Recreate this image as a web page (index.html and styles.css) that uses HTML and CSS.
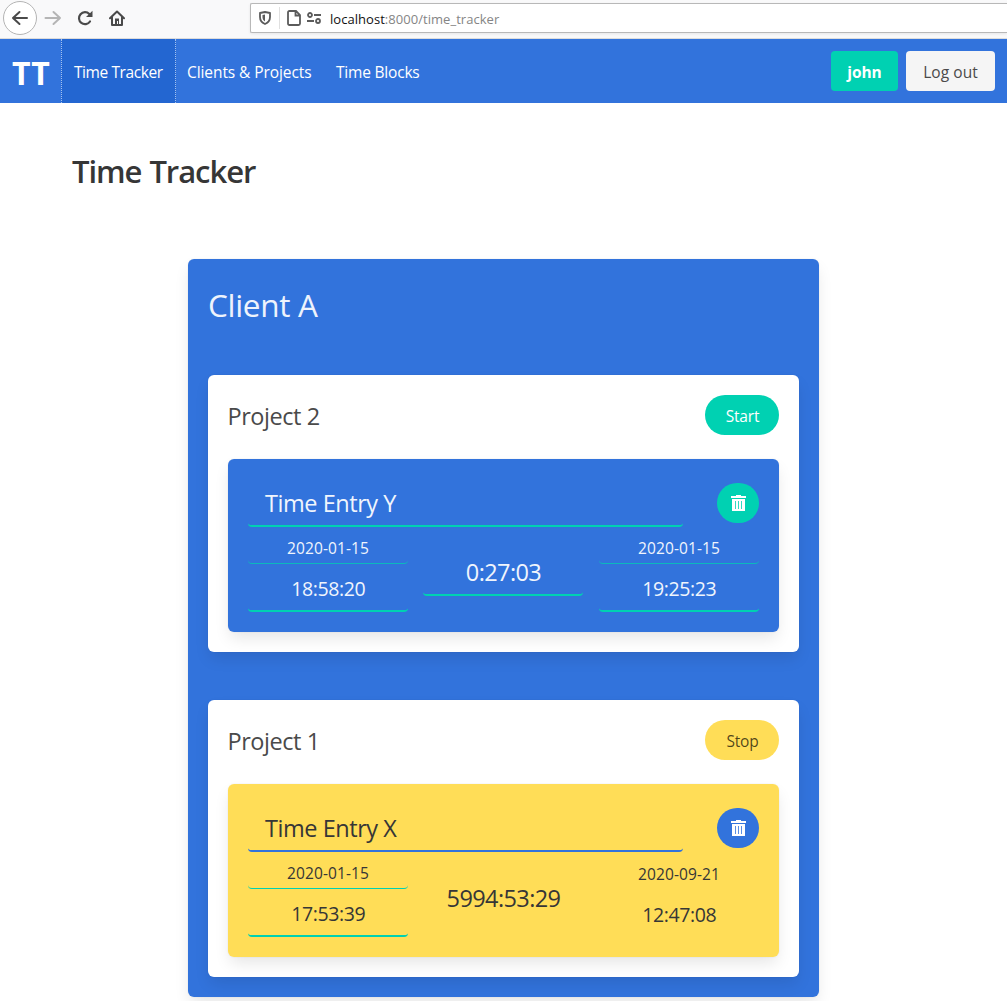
FILE: index.html
```html
<!DOCTYPE html>
<html lang="en">
<head>
<meta charset="utf-8">
<title>Time Tracker</title>
<link rel="stylesheet" href="styles.css">
</head>
<body>
<svg class="defs" width="0" height="0">
  <symbol id="trash" viewBox="0 0 15 16">
    <path fill="currentColor" fill-rule="evenodd" d="M5 0h5v1h5v2H0V1h5zM1 4h13v12H1zM4 6v8h.8V6zM7.100 6v8h.8V6zm3.100 0v8h.8V6z"/>
  </symbol>
</svg>
<header class="browser">
  <div class="controls">
    <span class="back"><svg width="18" height="16" viewBox="0 0 18 16"><path d="M16 8H2M8.500 2 2 8l6.500 6" fill="none" stroke="#4a4a4a" stroke-width="2" stroke-linecap="round" stroke-linejoin="round"/></svg></span>
    <svg class="forward" width="18" height="16" viewBox="0 0 18 16"><path d="M1.500 8H16M9.500 2 16 8l-6.500 6" fill="none" stroke="#b5b5b5" stroke-width="2" stroke-linecap="round" stroke-linejoin="round"/></svg>
    <svg class="reload" width="16" height="16" viewBox="0 0 16 16"><path d="M13 11.500A6 6 0 1 1 12.300 4" fill="none" stroke="#4a4a4a" stroke-width="2.200" stroke-linecap="round"/><path d="M15.500 .7V7H9z" fill="#4a4a4a"/></svg>
    <svg class="home" width="16" height="16" viewBox="0 0 16 16"><path d="M1 8.300 8 1.500l7 6.800M3 7v8h10V7" fill="none" stroke="#4a4a4a" stroke-width="2" stroke-linecap="round" stroke-linejoin="round"/><path d="M6 14V8.500h4V14H9v-3H8v3z" fill="#4a4a4a"/></svg>
  </div>
  <div class="address">
    <svg class="shield" width="12" height="14" viewBox="0 0 12 14"><path d="M6 1 11 2v4c0 3.500-1.800 5.700-5 7C2.800 11.700 1 9.500 1 6V2z" fill="none" stroke="#5b5b5b" stroke-width="1.800" stroke-linejoin="round"/><path d="M6 3.500v7C4 9.200 3.500 8 3.500 6V4z" fill="#5b5b5b"/></svg>
    <svg class="page" width="14" height="16" viewBox="0 0 14 16"><path d="M2.500 1H9l4 4v8.500q0 1.500-1.500 1.500h-9Q1 15 1 13.500v-11Q1 1 2.500 1zM8.500 1v4.500H13" fill="none" stroke="#5b5b5b" stroke-width="1.800"/></svg>
    <svg class="toggles" width="14" height="12" viewBox="0 0 14 12"><g fill="none" stroke="#5b5b5b" stroke-width="1.800"><circle cx="3" cy="3" r="2"/><path d="M7 3h7M0 9h7"/><circle cx="11" cy="9" r="2"/></g></svg>
    <span class="url"><b>localhost</b>:8000/time_tracker</span>
  </div>
</header>
<nav class="navbar">
  <a class="brand">TT</a>
  <a class="nav-item active">Time Tracker</a>
  <a class="nav-item projects">Clients &amp; Projects</a>
  <a class="nav-item">Time Blocks</a>
  <div class="account">
    <a class="button user">john</a>
    <a class="button logout">Log out</a>
  </div>
</nav>
<main>
  <h1>Time Tracker</h1>
  <section class="client">
    <h2>Client A</h2>
    <article class="project">
      <div class="project-head"><h3>Project 2</h3><a class="button pill start">Start</a></div>
      <div class="entry">
        <div class="entry-head"><div class="name">Time Entry Y</div><a class="trash"><svg width="15" height="16"><use href="#trash"/></svg></a></div>
        <div class="times">
          <div class="stamp"><div class="date">2020-01-15</div><div class="time">18:58:20</div></div>
          <div class="duration">0:27:03</div>
          <div class="stamp"><div class="date">2020-01-15</div><div class="time">19:25:23</div></div>
        </div>
      </div>
    </article>
    <article class="project">
      <div class="project-head"><h3>Project 1</h3><a class="button pill stop">Stop</a></div>
      <div class="entry running">
        <div class="entry-head"><div class="name">Time Entry X</div><a class="trash"><svg width="15" height="16"><use href="#trash"/></svg></a></div>
        <div class="times">
          <div class="stamp"><div class="date">2020-01-15</div><div class="time">17:53:39</div></div>
          <div class="duration">5994:53:29</div>
          <div class="stamp live"><div class="date">2020-09-21</div><div class="time">12:47:08</div></div>
        </div>
      </div>
    </article>
  </section>
</main>
</body>
</html>
```
FILE: styles.css
```css
* { box-sizing: border-box; }
body { margin: 0; height: 1001px; overflow: hidden; background: #fff; color: #4a4a4a; font: 15.5px/24px "Open Sans", "Noto Sans", sans-serif; letter-spacing: -.1px; white-space: nowrap; }
h1, h2, h3 { margin: 0; }
svg { display: block; flex: none; }
.defs { position: absolute; }

.browser { display: flex; height: 39px; background: #f9f9fa; border-bottom: 1px solid #dcdcdc; }
.controls { display: flex; align-items: center; width: 250px; padding-left: 3px; height: 36px; }
.back { display: flex; align-items: center; justify-content: center; width: 34px; height: 34px; border: 1px solid #b4b4b4; border-radius: 50%; background: #fff; }
.forward { margin-left: 7px; }
.reload { margin-left: 15px; }
.home { margin-left: 16px; }
.address { display: flex; align-items: center; flex: 1; height: 30px; margin-top: 3px; padding-left: 8px; background: #fff; border: 1px solid #b8b8b8; border-right: 0; border-radius: 2px 0 0 2px; box-shadow: 0 1px 3px rgba(0,0,0,.08); }
.shield { box-sizing: content-box; padding: 4px 8px 4px 0; border-right: 1px solid #e0e0e0; }
.page { margin-left: 7px; }
.toggles { margin-left: 6px; }
.url { margin-left: 9px; padding-top: 1px; font-size: 13px; letter-spacing: 0.04px; color: #858585; }
.url b { font-weight: 400; color: #111; }

.navbar { display: flex; height: 64px; background: #3273dc; color: #fff; }
.brand { width: 61px; padding-left: 12px; font-size: 32px; font-weight: 700; line-height: 68px; letter-spacing: .6px; }
.nav-item { padding: 0 12px; line-height: 67px; letter-spacing: -.2px; }
.nav-item.active { width: 115px; border: dotted #a4c2f0; border-width: 0 1px; background: #2366d1; letter-spacing: -.42px; }
.nav-item.projects { width: 148px; padding-left: 11px; letter-spacing: -.08px; }
.account { display: flex; gap: 8px; margin: 12px 12px 0 auto; }
.button { display: block; height: 40px; border-radius: 4px; line-height: 43px; text-align: center; }
.user { width: 67px; background: #00d1b2; font-weight: 700; }
.logout { width: 89px; background: #f5f5f5; color: #4a4a4a; letter-spacing: .05px; }

main { padding: 51px 72px 0; }
h1 { height: 36px; font-size: 31px; font-weight: 600; line-height: 34px; color: #363636; letter-spacing: -1.05px; word-spacing: 1px; }
.client { width: 631px; height: 738px; margin: 69px 0 0 116px; padding: 20px; border-radius: 6px; background: #3273dc; box-shadow: 0 8px 16px -2px rgba(10,10,10,.1), 0 0 0 1px rgba(10,10,10,.02); }
h2 { height: 96px; font-size: 31.5px; font-weight: 400; line-height: 52px; color: #eef3fc; letter-spacing: -.3px; }
.project { height: 277px; padding: 20px; border-radius: 6px; background: #fff; box-shadow: 0 8px 16px -2px rgba(10,10,10,.1), 0 0 0 1px rgba(10,10,10,.02); }
.project + .project { margin-top: 48px; }
.project-head { display: flex; justify-content: space-between; height: 64px; }
h3 { font-size: 23.5px; font-weight: 400; line-height: 42px; color: #4a4a4a; letter-spacing: -.45px; text-indent: -.5px; }
.pill { width: 74px; border-radius: 20px; text-indent: 1px; letter-spacing: -.2px; }
.start { background: #00d1b2; color: #fff; }
.stop { background: #ffdd57; color: rgba(0,0,0,.7); }
.entry { height: 173px; padding: 20px; border-radius: 6px; background: #3273dc; color: #f0f5fd; box-shadow: 0 8px 16px -2px rgba(10,10,10,.1), 0 0 0 1px rgba(10,10,10,.02); }
.entry-head { display: flex; justify-content: space-between; }
.name { width: 435px; height: 48px; padding-left: 17px; border-bottom: 2px solid #00d1b2; border-radius: 4px; font-size: 23.5px; line-height: 48px; letter-spacing: -.45px; }
.trash { display: flex; align-items: center; justify-content: center; width: 42px; height: 40px; margin-top: 4px; border-radius: 20px; background: #00d1b2; color: #fff; }
.times { display: grid; grid-template-columns: 175px 176px 160px; text-align: center; }
.stamp, .duration { width: 160px; }
.date { height: 37px; border-bottom: 1px solid #00d1b2; border-radius: 4px; line-height: 43px; letter-spacing: .1px; }
.entry:not(.running) .date { border-color: #0cb9bc; }
.time { height: 48px; border-bottom: 2px solid #00d1b2; border-radius: 4px; font-size: 19.5px; line-height: 50px; letter-spacing: -.4px; text-indent: .5px; }
.duration { height: 45px; margin-top: 24px; border-bottom: 2px solid #00d1b2; border-radius: 4px; font-size: 23.5px; line-height: 42px; letter-spacing: -.6px; text-indent: 1px; }
.running { background: #ffdd57; color: #363636; }
.running .name { border-color: #3273dc; }
.running .trash { background: #3273dc; }
.running .duration { border-color: transparent; line-height: 44px; }
.live .date { line-height: 45px; }
.live .time { line-height: 52px; }
.running .live .date, .running .live .time { border-color: transparent; }
```
